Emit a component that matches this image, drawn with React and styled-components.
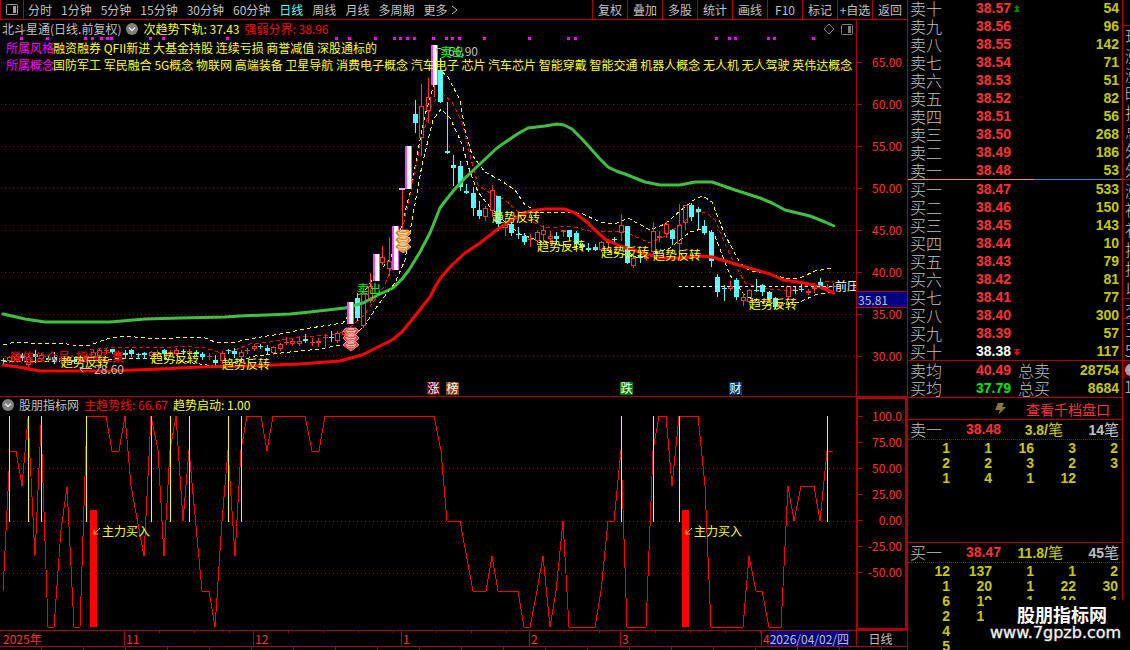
import React from 'react';
import styled, { createGlobalStyle } from 'styled-components';

const LINE = '#b00000';
const RED = '#ff3232';
const CYAN = '#54fcfc';
const GRAY = '#c0c0c0';
const YELLOW = '#ffff00';
const OLIVE = '#c8c800';
const CJK = '"Noto Sans CJK SC", sans-serif';

const GlobalStyle = createGlobalStyle`
  * { box-sizing: border-box; }
  body { margin: 0; background: #000; color: ${GRAY}; font: 12px/16px ${CJK}; overflow: hidden; }
  button { margin: 0; padding: 0; border: 0; background: none; color: inherit; font: inherit; cursor: pointer; }
  table { border-collapse: collapse; }
  td, th { padding: 0; font-weight: 400; text-align: left; }
`;

const Terminal = styled.div`
  display: flex;
  width: 100%;
  height: 100vh;
  overflow: hidden;
`;

const ChartArea = styled.main`
  flex: 1;
  min-width: 0;
  display: grid;
  grid-template-rows: 20px minmax(0, 377fr) minmax(0, 233fr) 20px;
`;

const Toolbar = styled.nav`
  display: flex;
  justify-content: space-between;
  border-bottom: 1px solid ${LINE};
  white-space: nowrap;
`;

const LayoutButton = styled.button`
  width: 24px;
  height: 19px;
  display: flex;
  align-items: center;
  justify-content: center;
  border-left: 1px solid ${LINE};
  border-right: 1px solid ${LINE};
`;

const Periods = styled.div`
  display: flex;
  align-items: center;
  gap: 9px;
`;

const PeriodGroup = styled.div`
  display: flex;
  gap: 4px;
`;

const Period = styled.button`
  color: ${(p) => (p.$active ? CYAN : GRAY)};
  display: flex;
  align-items: center;
  gap: 4px;
`;

const Actions = styled.div`
  display: flex;
`;

const Action = styled.button`
  width: 35px;
  border-left: 1px solid ${LINE};
`;

const Panel = styled.section`
  display: grid;
  grid-template-columns: minmax(0, 1fr) 51px;
  grid-template-rows: minmax(0, 1fr);
  min-height: 0;
  border-bottom: ${(p) => (p.$divided ? `1px solid ${LINE}` : '0')};
`;

const Plot = styled.svg`
  grid-area: 1 / 1;
  display: block;
  width: 100%;
  height: 100%;
  font: 12px ${CJK};
`;

const Legend = styled.header`
  grid-area: 1 / 1;
  z-index: 1;
  display: flex;
  align-items: center;
  align-self: start;
  gap: 5px;
  height: ${(p) => (p.$compact ? 16 : 18)}px;
  padding: 0 3px 0 2px;
  white-space: nowrap;
`;

const LegendItem = styled.span`
  color: ${(p) => p.$color || GRAY};
`;

const LegendTools = styled.div`
  margin-left: auto;
  display: flex;
  align-items: center;
  gap: 6px;
`;

const RoundButton = styled.button`
  display: flex;
`;

const Scale = styled.div`
  grid-area: 1 / 2;
  position: relative;
  color: ${RED};
  text-align: right;
  padding-top: ${(p) => (p.$framed ? '4px' : '21px')};
  border: 0 solid ${LINE};
  border-width: ${(p) => (p.$framed ? '2px 2px 2px 2px' : '0 0 0 1px')};
`;

const ScaleMark = styled.div`
  display: flex;
  align-items: center;
  height: ${(p) => p.$step}px;
  padding-right: ${(p) => (p.$step > 30 ? 5 : 3)}px;
  &::before {
    content: '';
    width: 5px;
    height: 1px;
    margin-right: auto;
    background: ${LINE};
  }
`;

const PriceTag = styled.div`
  position: absolute;
  left: 0;
  right: 0;
  top: 72%;
  height: 17px;
  line-height: 15px;
  text-align: left;
  padding-left: 1px;
  color: ${GRAY};
  background: #000080;
  border: solid ${LINE};
  border-width: 1px 0;
`;

const TimeBar = styled.footer`
  display: flex;
  flex-direction: column;
  border-top: 1px solid ${LINE};
`;

const TimeRow = styled.div`
  display: grid;
  grid-template-columns: 124fr 129fr 148fr 128fr 91fr 141fr 95fr 51px;
  height: 16px;
  line-height: 15px;
  color: ${RED};
  border-bottom: 1px solid ${LINE};
  white-space: nowrap;
`;

const TimeCell = styled.div`
  display: flex;
  min-width: 0;
  padding-left: ${(p) => (p.$first ? 3 : 1)}px;
  border-left: ${(p) => (p.$first ? '0' : `1px solid ${LINE}`)};
  background: ${(p) =>
    p.$ticks ? `repeating-linear-gradient(90deg, transparent 0 34px, ${LINE} 34px 35px) 0 0 / 100% 2px no-repeat` : 'none'};
`;

const CurrentDate = styled.time`
  height: 15px;
  background: #000080;
  color: ${GRAY};
`;

const TimeUnit = styled.button`
  color: ${GRAY};
  border-left: 1px solid ${LINE};
  padding-right: 3px;
`;

const TickStrip = styled.div`
  height: 3px;
  background: repeating-linear-gradient(90deg, transparent 0 41px, ${LINE} 41px 42px);
`;

const Sidebar = styled.aside`
  width: 223px;
  display: grid;
  grid-template-columns: minmax(0, 1fr) 7px;
  border-left: 1px solid ${LINE};
`;

const Book = styled.div`
  display: flex;
  flex-direction: column;
  min-width: 0;
  border-right: 1px solid ${LINE};
`;

const BookTable = styled.table`
  width: 100%;
  table-layout: fixed;
  margin-top: ${(p) => (p.$top ? '-1px' : '0')};
`;

const BookRow = styled.tr`
  height: 18px;
`;

const Side = styled.th`
  width: ${(p) => p.$w || 68}px;
  padding-left: ${(p) => (p.$w ? 0 : 2)}px;
  height: 18px;
  font-size: 16px;
  font-weight: 300;
  line-height: 18px;
`;

const Num = styled.td`
  width: ${(p) => (p.$w ? `${p.$w}px` : 'auto')};
  font: bold 14px/18px "Liberation Sans", sans-serif;
  color: ${(p) => p.$color || OLIVE};
  text-align: ${(p) => (p.$left ? 'left' : 'right')};
  padding-right: ${(p) => (p.$left ? 0 : 3)}px;
`;

const Mark = styled.td`
  width: 36px;
`;

const Spread = styled.div`
  height: 1px;
  background: linear-gradient(90deg, #e0a040 0 59%, #4a80d0 59%);
`;

const Rule = styled.div`
  height: 1px;
  flex: none;
  background: ${LINE};
`;

const DepthButton = styled.button`
  height: 21px;
  display: flex;
  align-items: center;
  justify-content: flex-end;
  gap: 20px;
  padding-right: 12px;
  font-size: 14px;
  color: ${RED};
`;

const Queue = styled.section`
  height: ${(p) => (p.$grow ? 'auto' : '122px')};
  flex: none;
`;

const QueueHead = styled.div`
  display: grid;
  grid-template-columns: 55px 36px 62px 1fr;
  height: 20px;
  padding: 0 3px 0 2px;
  font: bold 14px/18px "Liberation Sans", sans-serif;
  border-bottom: 1px dotted ${LINE};
  text-align: right;
`;

const QueueSide = styled.span`
  font: 300 16px/18px ${CJK};
  text-align: left;
`;

const QueueFigure = styled.span`
  color: ${(p) => p.$color};
  white-space: nowrap;
`;

const Unit = styled.span`
  font: 400 15px/18px ${CJK};
`;

const LotTable = styled.table`
  width: calc(100% - 4px);
  table-layout: fixed;
  margin-top: 1px;
`;

const Lot = styled.td`
  height: 15px;
  font: bold 14px/15px "Liberation Sans", sans-serif;
  color: ${OLIVE};
  text-align: right;
`;

const QuoteStrip = styled.div`
  overflow: hidden;
  padding: 25px 0 0 1px;
  font-size: 16px;
  font-weight: 300;
`;

const StripGroup = styled.div`
  border-top: 1px solid ${LINE};
  margin-left: -1px;
  padding-left: 2px;
  height: ${(p) => p.$h}px;
  display: flex;
  flex-direction: column;
  justify-content: space-around;
  line-height: 18px;
  background: ${(p) => p.$bg || 'none'};
`;

const Watermark = styled.div`
  position: fixed;
  right: 0;
  bottom: 0;
  width: 146px;
  height: 50px;
  padding: 4px 0 0 6px;
  background: #000;
  color: #fff;
`;

const SiteName = styled.div`
  text-align: center;
  font: bold 18px/20px ${CJK};
  padding-left: 4px;
`;

const SiteUrl = styled.div`
  font: 16px/18px "DejaVu Sans", sans-serif;
  -webkit-text-stroke: 1px rgba(255, 255, 255, 0.4);
  color: #eee;
`;

const periods = ['分时', '1分钟', '5分钟', '15分钟', '30分钟', '60分钟', '日线', '周线', '月线', '多周期'];
const actions = ['复权', '叠加', '多股', '统计', '画线', 'F10', '标记', '+自选', '返回'];

const asks = [
  ['卖十', '38.57', 54], ['卖九', '38.56', 96], ['卖八', '38.55', 142], ['卖七', '38.54', 71], ['卖六', '38.53', 51],
  ['卖五', '38.52', 82], ['卖四', '38.51', 56], ['卖三', '38.50', 268], ['卖二', '38.49', 186], ['卖一', '38.48', 53],
];
const bids = [
  ['买一', '38.47', 533], ['买二', '38.46', 150], ['买三', '38.45', 143], ['买四', '38.44', 10], ['买五', '38.43', 79],
  ['买六', '38.42', 81], ['买七', '38.41', 77], ['买八', '38.40', 300], ['买九', '38.39', 57], ['买十', '38.38', 117],
];
const askLots = [[1, 1, 16, 3, 2], [2, 2, 3, 2, 3], [1, 4, 1, 12, '']];
const bidLots = [[12, 137, 1, 1, 2], [1, 20, 1, 22, 30], [6, 19, 1, 10, 1], [2, 10, '', '', ''], [4, '', '', '', ''], [5, '', '', '', '']];

// x, direction, high, body top, body bottom, low
const candles = [
  [3, 'd', 358, 360, 361, 364], [9, 'u', 356, 357, 361, 362], [16, 'u', 354, 356, 360, 361], [22, 'd', 353, 355, 358, 360],
  [28, 'u', 354, 357, 365, 366], [35, 'd', 350, 354, 357, 362], [41, 'u', 353, 355, 359, 361], [48, 'd', 356, 358, 360, 361],
  [54, 'd', 352, 357, 362, 363], [61, 'u', 356, 358, 361, 363], [67, 'u', 357, 358, 362, 364], [74, 'd', 357, 360, 362, 363],
  [80, 'u', 355, 357, 361, 362], [86, 'u', 354, 356, 359, 361], [93, 'u', 350, 352, 358, 359], [99, 'u', 349, 350, 356, 357],
  [106, 'u', 348, 350, 351, 353], [112, 'd', 349, 349, 352, 353], [118, 'u', 351, 353, 356, 357], [125, 'd', 350, 353, 355, 358],
  [131, 'd', 349, 350, 354, 356], [138, 'd', 353, 354, 355, 358], [144, 'd', 352, 353, 355, 358], [151, 'u', 351, 352, 356, 357],
  [157, 'u', 350, 352, 355, 357], [164, 'd', 349, 350, 354, 356], [170, 'u', 350, 352, 354, 356], [176, 'u', 348, 350, 354, 355],
  [183, 'd', 349, 351, 352, 354], [189, 'u', 349, 351, 354, 355], [196, 'd', 350, 352, 354, 356], [202, 'd', 352, 354, 357, 359],
  [209, 'u', 353, 356, 357, 359], [215, 'd', 355, 360, 363, 366], [222, 'u', 351, 353, 361, 363], [228, 'd', 349, 350, 351, 353],
  [234, 'd', 348, 351, 354, 357], [241, 'u', 350, 352, 357, 358], [247, 'u', 348, 350, 351, 353], [254, 'u', 344, 346, 349, 350],
  [260, 'd', 344, 346, 347, 348], [267, 'd', 345, 348, 351, 353], [273, 'u', 346, 347, 353, 354], [280, 'u', 343, 344, 349, 350],
  [286, 'u', 337, 342, 343, 344], [292, 'u', 339, 341, 344, 345], [299, 'u', 336, 341, 344, 345], [305, 'd', 334, 339, 341, 342],
  [312, 'u', 338, 342, 343, 345], [318, 'u', 338, 341, 343, 346], [325, 'u', 334, 337, 338, 347], [331, 'd', 331, 337, 338, 341],
  [337, 'u', 331, 333, 341, 342], [344, 'u', 329, 331, 335, 337],
  [357, 'd', 293, 298, 318, 320], [363, 'u', 292, 294, 326, 327], [370, 'u', 273, 286, 301, 302], [382, 'u', 246, 257, 263, 264],
  [389, 'u', 237, 261, 269, 275], [415, 'd', 100, 114, 123, 132], [421, 'u', 84, 106, 138, 155], [428, 'u', 78, 97, 111, 122],
  [440, 'd', 58, 70, 102, 102], [447, 'd', 102, 151, 153, 153], [453, 'd', 155, 165, 168, 185], [460, 'd', 161, 166, 187, 190],
  [466, 'd', 184, 191, 193, 193], [473, 'd', 187, 193, 208, 215], [479, 'd', 201, 210, 216, 218], [485, 'u', 206, 208, 217, 220],
  [492, 'u', 185, 190, 211, 216], [498, 'd', 196, 196, 224, 230], [505, 'u', 218, 225, 228, 235], [511, 'd', 220, 224, 233, 235],
  [518, 'd', 227, 234, 235, 238], [524, 'd', 233, 236, 242, 244], [530, 'u', 234, 239, 240, 246], [537, 'u', 230, 232, 241, 244],
  [543, 'u', 225, 230, 235, 240], [550, 'u', 231, 236, 239, 243], [556, 'd', 232, 236, 239, 243], [563, 'u', 230, 230, 232, 236],
  [569, 'd', 230, 230, 237, 240], [576, 'd', 231, 233, 244, 247], [582, 'd', 243, 245, 247, 249], [588, 'd', 243, 248, 250, 251],
  [595, 'd', 244, 247, 250, 250], [601, 'u', 241, 242, 250, 251], [608, 'u', 239, 241, 243, 249], [614, 'd', 237, 239, 240, 242],
  [621, 'u', 214, 225, 233, 240], [627, 'd', 226, 226, 263, 263], [633, 'u', 255, 258, 266, 267], [640, 'd', 252, 256, 258, 262],
  [646, 'u', 254, 257, 259, 260], [653, 'u', 222, 231, 252, 254], [659, 'u', 231, 236, 238, 241], [666, 'u', 222, 224, 234, 237],
  [672, 'd', 229, 230, 239, 244], [679, 'u', 204, 225, 244, 249], [685, 'u', 205, 205, 223, 229], [691, 'd', 203, 205, 217, 220],
  [698, 'd', 207, 209, 212, 228], [704, 'd', 220, 226, 233, 234], [711, 'd', 230, 232, 261, 266], [717, 'd', 274, 277, 292, 296],
  [724, 'd', 285, 288, 289, 300], [730, 'u', 281, 286, 289, 290], [736, 'd', 278, 280, 297, 299], [743, 'u', 293, 297, 301, 305],
  [749, 'u', 289, 290, 302, 304], [756, 'd', 279, 290, 291, 291], [762, 'd', 284, 285, 292, 295], [769, 'd', 291, 292, 299, 301],
  [775, 'd', 297, 298, 307, 308], [781, 'u', 302, 303, 306, 308], [788, 'u', 286, 286, 297, 298], [795, 'd', 286, 290, 291, 293],
  [801, 'd', 284, 289, 290, 291], [808, 'u', 289, 291, 293, 294], [814, 'u', 285, 287, 289, 292], [820, 'd', 278, 282, 287, 288],
  [827, 'u', 284, 287, 288, 290], [833, 'u', 283, 286, 287, 290],
];

const limitUps = [[347, 302, 324], [373, 254, 281], [392, 226, 270], [405, 146, 189], [431, 45, 85]];
const signals = [21, 47, 85, 92, 101, 107, 111, 150, 163, 227, 336, 349, 375, 394, 400, 407, 414, 433, 446, 452, 459, 484, 529, 568, 575, 716, 729, 735, 768, 774, 813];
const reversals = [[61, 367], [151, 363], [222, 369], [492, 222], [537, 251], [601, 257], [653, 260], [749, 309]];
const badges = [[427, '涨', '#800000'], [446, '榜', '#8a4500'], [620, '跌', '#008000'], [729, '财', '#003a70']];

const greenLine = '3,314 12,316 25,319 45,322 110,322 145,319 180,318 225,317 240,316 290,314 310,312 345,308 363,303 380,294 393,288 402,279 409,270 420,252 430,233 440,208 446,200 454,190 465,178 480,164 497,148 510,139 519,133 528,128 545,126 557,124 564,125 572,129 582,139 592,150 600,159 608,167 616,171 625,174 645,182 660,185 680,185 695,182 712,182 735,190 760,198 772,203 785,210 810,216 825,222 834,226';
const redLine = '3,365 18,367 40,371 110,371 160,369 200,367 250,366 300,364 340,361 362,355 380,346 392,340 402,332 415,316 430,297 435,287 442,276 453,264 465,253 480,243 498,229 515,218 530,211 545,209 564,209 575,213 588,223 597,232 605,239 620,246 640,252 660,258 680,258 700,256 712,257 735,264 770,274 783,280 805,283 820,287 834,293';
const upperBand = '3,345 15,342 30,343 60,343 80,346 90,345 110,338 125,336 145,338 160,339 190,337 205,338 215,342 235,342 255,338 280,334 310,328 343,323 352,310 375,276 390,259 398,240 405,212 412,185 418,150 425,115 434,84 440,70 448,77 460,100 465,130 472,155 485,172 500,180 515,190 525,205 540,213 570,212 583,214 600,222 615,224 628,218 650,230 665,224 680,211 695,199 703,196 712,202 725,235 740,263 750,271 770,274 785,278 800,278 815,271 833,268';
const middleBand = '90,350 115,347 150,347 165,348 185,346 205,348 225,354 250,344 270,342 300,337 330,335 345,332 365,314 385,285 393,264 400,240 409,200 420,146 430,108 441,92 452,102 462,122 470,155 478,185 490,193 505,200 525,218 545,228 570,226 590,231 625,232 650,243 665,236 680,225 695,213 705,212 715,220 730,255 745,283 760,288 790,291 815,283 833,281';
const lowerBand = '3,361 60,361 100,360 130,358 160,358 200,364 220,367 255,356 290,352 320,349 345,344 365,325 378,305 395,283 405,260 413,215 422,165 433,120 441,109 450,118 462,144 470,172 478,192 490,207 505,222 520,234 540,241 570,247 600,249 640,258 670,248 690,232 705,228 715,236 730,275 745,296 770,305 800,302 815,295 834,292';
const trend = '3,591 10,451 16,451 22,486 28,418 35,556 41,425 48,627 54,627 61,530 67,487 74,627 80,627 87,416 106,416 112,451 119,451 125,416 131,486 144,556 151,416 158,450 164,556 170,450 176,416 183,521 189,450 202,591 209,591 215,627 222,521 228,450 235,556 241,450 247,416 261,416 267,451 273,416 305,416 312,451 319,451 325,416 434,416 441,451 447,521 460,521 473,591 486,591 492,556 498,591 518,591 524,627 530,627 537,591 543,556 550,627 556,591 563,521 569,627 595,627 601,591 608,521 614,521 621,450 627,627 646,627 653,451 659,416 666,416 672,486 679,416 698,416 705,486 711,627 743,627 749,556 756,591 762,591 769,627 781,627 788,486 794,521 801,486 814,486 820,521 827,451 833,451';
const starts = [9, 28, 41, 86, 151, 170, 189, 228, 241, 621, 653, 679, 827];

function PanelIcon({ color = '#808080' }) {
  return (
    <svg width="12" height="11" viewBox="0 0 12 11" aria-hidden="true">
      <rect x="0.5" y="0.5" width="11" height="10" rx="1" fill="none" stroke={color} />
      <rect x="7" y="2" width="3" height="7" fill={color} />
    </svg>
  );
}

function Collapse() {
  return (
    <RoundButton aria-label="折叠">
      <svg width="12" height="12" viewBox="0 0 12 12">
        <circle cx="6" cy="6" r="6" fill="#808080" />
        <path d="M3 4.5 6 7.5 9 4.5" fill="none" stroke="#e8e8e8" strokeWidth="1.3" />
      </svg>
    </RoundButton>
  );
}

function Candle({ c: [x, dir, high, top, bottom, low] }) {
  if (dir === 'd') {
    return (
      <g fill={CYAN}>
        <rect x={x} y={high} width="1" height={low - high + 1} />
        <rect x={x - 2} y={top} width="5" height={Math.max(1, bottom - top)} />
      </g>
    );
  }
  return (
    <g fill={RED}>
      <rect x={x} y={high} width="1" height={top - high} />
      <rect x={x} y={bottom} width="1" height={low - bottom + 1} />
      {bottom - top < 2 ? (
        <rect x={x - 2} y={top} width="5" height="1" />
      ) : (
        <rect x={x - 1.5} y={top + 0.5} width="4" height={bottom - top - 1} fill="none" stroke={RED} />
      )}
    </g>
  );
}

function Gem({ x, y, dark, light }) {
  return (
    <g transform={`translate(${x} ${y})`}>
      {[0, 7, 14].map((dy) => (
        <g key={dy} transform={`translate(0 ${dy})`}>
          <path d={dy === 14 ? 'M-5 0H5L8 3 0 9-8 3Z' : 'M-5 0H5L8 3 4 7H-4L-8 3Z'} fill={dark} stroke={light} strokeWidth="0.8" />
          <path d="M-5 2.5Q0 5 5 2.5M-3 1H3" stroke="#ffe8d0" strokeWidth="1.2" fill="none" />
          <path d="M-4 4.5 0 6 4 4.5" stroke={light} fill="none" />
        </g>
      ))}
    </g>
  );
}

function DottedRow({ y, color }) {
  return <line x1="1" x2="856" y1={y + 0.5} y2={y + 0.5} stroke={color} strokeDasharray="1 3" />;
}

function PricePlot() {
  return (
    <Plot viewBox="0 20 856 376" preserveAspectRatio="xMinYMin meet" role="img" aria-label="日线K线图">
      {[62, 104, 146, 188, 230, 272, 314, 356].map((y) => <DottedRow key={y} y={y} color="#a80000" />)}
      {signals.map((x) => <rect key={x} x={x - 1} y="37" width="3" height="3" fill="#ff00ff" />)}
      <g fill="none" strokeDasharray="4 3" shapeRendering="crispEdges">
        <polyline points={upperBand} stroke={YELLOW} />
        <polyline points={middleBand} stroke="#ff0000" />
        <polyline points={lowerBand} stroke={YELLOW} />
      </g>
      {candles.map((c) => <Candle key={c[0]} c={c} />)}
      <rect x="402" y="189" width="1" height="38" fill={RED} />
      <rect x="434" y="85" width="1" height="12" fill={RED} />
      <rect x="399" y="188" width="6" height="2" fill="#ffb0ff" />
      <g fill="none" strokeWidth="3" strokeLinejoin="round" strokeLinecap="round">
        <polyline points={greenLine} stroke="#40c040" />
        <polyline points={redLine} stroke="#ff0000" />
      </g>
      {limitUps.map(([x, top, bottom]) => (
        <g key={x}>
          <rect x={x} y={top} width="7" height={bottom - top} fill="#ff40ff" />
          <rect x={x + 2} y={top} width="4" height={bottom - top} fill="#fff" />
        </g>
      ))}
      <line x1="679" x2="834" y1="286.5" y2="286.5" stroke="#fff" strokeDasharray="3 3" />
      <Gem x={351} y={328} dark="#f04048" light="#ffa8a0" />
      <Gem x={403} y={230} dark="#e08828" light="#ffc890" />
      <g fill="#ff00ff">
        <text x="6" y="53">所属风格</text>
        <text x="6" y="70">所属概念</text>
      </g>
      <g fill={YELLOW}>
        <text x="53" y="53">融资融券 QFII新进 大基金持股 连续亏损 商誉减值 深股通标的</text>
        <text x="53" y="70">国防军工 军民融合 5G概念 物联网 高端装备 卫星导航 消费电子概念 汽车电子 芯片 汽车芯片 智能穿戴 智能交通 机器人概念 无人机 无人驾驶 英伟达概念</text>
      </g>
      <text x="10" y="362" fill="#ff0000">微信公众号: 指标汇集</text>
      {reversals.map(([x, y]) => <text key={x} x={x} y={y} fill={YELLOW}>趋势反转</text>)}
      <path d="M80 368.5H92M80 368.5l4-2M80 368.5l3 4M436 48.5H440L447 51.5M436 48.5l1 4" stroke={GRAY} fill="none" />
      <text x="94" y="374" fill={GRAY}>28.60</text>
      <text x="448" y="56" fill={GRAY}>66.90</text>
      <text x="357" y="294" fill="#00ff00">卖出</text>
      <text x="440" y="57" fill="#00ff00">卖出</text>
      <text x="835" y="291" fill="#fff">前压</text>
      {badges.map(([x, label, color]) => (
        <g key={x}>
          <rect x={x} y="382" width="13" height="13" fill={color} />
          <text x={x + 0.5} y="393" fill="#fff">{label}</text>
        </g>
      ))}
    </Plot>
  );
}

function TrendPlot() {
  return (
    <Plot viewBox="0 397 856 233" preserveAspectRatio="xMinYMin meet" role="img" aria-label="主趋势线">
      {[468, 521, 573].map((y) => <DottedRow key={y} y={y} color="#a01010" />)}
      <polyline points={trend} fill="none" stroke="#ff0000" shapeRendering="crispEdges" />
      {starts.map((x) => <rect key={x} x={x} y="416" width="1" height="106" fill={YELLOW} />)}
      {[90, 682].map((x) => (
        <g key={x}>
          <rect x={x} y="510" width="7" height="117" fill="#ff0000" />
          <path d={`M${x + 10} 528l-5 5M${x + 4} 530v4h4`} stroke="#e0c000" fill="none" />
          <text x={x + 12} y="536" fill={YELLOW}>主力买入</text>
        </g>
      ))}
    </Plot>
  );
}

function Arrow({ up }) {
  return (
    <svg width="6" height="8" viewBox="0 0 6 8" aria-hidden="true">
      <path
        d={up ? 'M3 0 6 3H4V4L6 7H0L2 4V3H0Z' : 'M0 1H6L4 3V4H6L3 8 0 4H2V3Z'}
        fill={up ? '#008800' : '#ff0000'}
      />
    </svg>
  );
}

function Quotes({ rows, top }) {
  return (
    <BookTable $top={top}>
      <tbody>
        {rows.map(([side, price, volume]) => (
          <BookRow key={side}>
            <Side scope="row">{side}</Side>
            <Num $left $w={38} $color={price === '38.38' ? '#fff' : RED}>{price}</Num>
            <Mark>
              {side === '卖十' && <Arrow up />}
              {side === '买十' && <Arrow />}
            </Mark>
            <Num>{volume}</Num>
          </BookRow>
        ))}
      </tbody>
    </BookTable>
  );
}

function OrderQueue({ side, price, average, count, lots, grow }) {
  return (
    <Queue $grow={grow}>
      <QueueHead>
        <QueueSide>{side}</QueueSide>
        <QueueFigure $color={RED}>{price}</QueueFigure>
        <QueueFigure $color={OLIVE}>{average}/<Unit>笔</Unit></QueueFigure>
        <QueueFigure $color={GRAY}>{count}<Unit>笔</Unit></QueueFigure>
      </QueueHead>
      <LotTable>
        <tbody>
          {lots.map((row, i) => (
            <tr key={i}>{row.map((lot, j) => <Lot key={j}>{lot}</Lot>)}</tr>
          ))}
        </tbody>
      </LotTable>
    </Queue>
  );
}

export default function App() {
  return (
    <Terminal>
      <GlobalStyle />
      <ChartArea>
        <Toolbar>
          <PeriodGroup>
            <LayoutButton aria-label="布局"><PanelIcon color="#a0a0a0" /></LayoutButton>
            <Periods>
              {periods.map((p) => <Period key={p} $active={p === '日线'}>{p}</Period>)}
              <Period>
                更多
                <svg width="7" height="10" viewBox="0 0 7 10" aria-hidden="true">
                  <path d="M1 1 6 5 1 9" fill="none" stroke={GRAY} />
                </svg>
              </Period>
            </Periods>
          </PeriodGroup>
          <Actions>{actions.map((a) => <Action key={a}>{a}</Action>)}</Actions>
        </Toolbar>

        <Panel $divided>
          <PricePlot />
          <Legend>
            <LegendItem>北斗星通(日线.前复权)</LegendItem>
            <Collapse />
            <LegendItem $color={YELLOW}>次趋势下轨: 37.43</LegendItem>
            <LegendItem $color="#ff0000">强弱分界: 38.96</LegendItem>
            <LegendTools>
              <svg width="12" height="12" viewBox="0 0 12 12" aria-hidden="true">
                <path d="M6 1 11 6 6 11 1 6Z" fill="none" stroke="#808080" />
              </svg>
              <PanelIcon />
            </LegendTools>
          </Legend>
          <Scale>
            {['65.00', '60.00', '55.00', '50.00', '45.00', '40.00', '35.00', '30.00'].map((v) => (
              <ScaleMark key={v} $step={42}>{v}</ScaleMark>
            ))}
            <PriceTag>35.81</PriceTag>
          </Scale>
        </Panel>

        <Panel>
          <TrendPlot />
          <Legend $compact>
            <Collapse />
            <LegendItem>股朋指标网</LegendItem>
            <LegendItem $color="#ff0000">主趋势线: 66.67</LegendItem>
            <LegendItem $color={YELLOW}>趋势启动: 1.00</LegendItem>
          </Legend>
          <Scale $framed>
            {['100.0', '75.00', '50.00', '25.00', '0.00', '-25.00', '-50.00'].map((v) => (
              <ScaleMark key={v} $step={26}>{v}</ScaleMark>
            ))}
          </Scale>
        </Panel>

        <TimeBar>
          <TimeRow>
            <TimeCell $first>2025年</TimeCell>
            {['11', '12', '1', '2', '3'].map((m) => <TimeCell key={m} $ticks>{m}</TimeCell>)}
            <TimeCell>4<CurrentDate>2026/04/02/四</CurrentDate></TimeCell>
            <TimeUnit>日线</TimeUnit>
          </TimeRow>
          <TickStrip />
        </TimeBar>
      </ChartArea>

      <Sidebar>
        <Book>
          <Quotes rows={asks} top />
          <Spread />
          <Quotes rows={bids} />
          <Rule />
          <BookTable>
            <tbody>
              <BookRow>
                <Side scope="row">卖均</Side><Num $left $w={42} $color={RED}>40.49</Num>
                <Side scope="row" $w={36}>总卖</Side><Num>28754</Num>
              </BookRow>
              <BookRow>
                <Side scope="row">买均</Side><Num $left $w={42} $color="#00e600">37.79</Num>
                <Side scope="row" $w={36}>总买</Side><Num>8684</Num>
              </BookRow>
            </tbody>
          </BookTable>
          <Rule />
          <DepthButton>
            <svg width="11" height="12" viewBox="0 0 11 12" aria-hidden="true">
              <path d="M3 0H9L7 4H11L3 12 5 7H0Z" fill="#8a7a30" />
            </svg>
            查看千档盘口
          </DepthButton>
          <Rule />
          <OrderQueue side="卖一" price="38.48" average="3.8" count="14" lots={askLots} />
          <Rule />
          <OrderQueue side="买一" price="38.47" average="11.8" count="45" lots={bidLots} grow />
        </Book>
        <QuoteStrip aria-hidden="true">
          <StripGroup $h={154}>
            {['现', '涨', '涨', '昨', '振', '总', '外', '外'].map((t, i) => <span key={i}>{t}</span>)}
          </StripGroup>
          <StripGroup $h={119}>
            {['涨', '被', '补', '换', '换', '以'].map((t, i) => <span key={i}>{t}</span>)}
          </StripGroup>
          <StripGroup $h={20}><span>交</span></StripGroup>
          <StripGroup $h={42}><span>王</span><span>5</span></StripGroup>
          <StripGroup $h={18} $bg="#500000">
            <svg width="12" height="12" viewBox="0 0 12 12"><circle cx="6" cy="6" r="6" fill="#a0a0a0" /><path d="M4 6h5" stroke="#fff" /></svg>
          </StripGroup>
          <span>1</span>
        </QuoteStrip>
      </Sidebar>

      <Watermark>
        <SiteName>股朋指标网</SiteName>
        <SiteUrl>www.7gpzb.com</SiteUrl>
      </Watermark>
    </Terminal>
  );
}
